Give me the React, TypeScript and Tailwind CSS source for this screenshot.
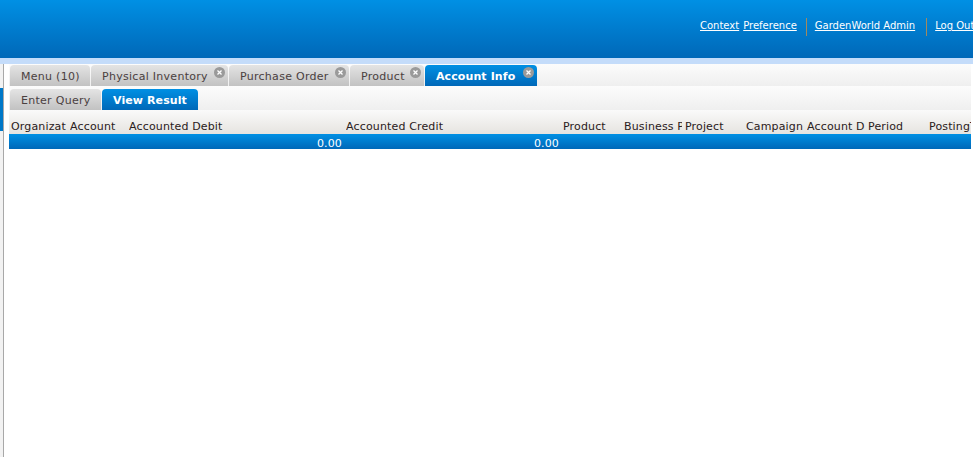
const font = "font-['DejaVu_Sans','Verdana',sans-serif]";

function CloseDot() {
  return (
    <span className="absolute right-[3px] top-[2px] flex h-[11px] w-[11px] items-center justify-center rounded-full bg-[#9a9a9a]">
      <svg width="7" height="7" viewBox="0 0 7 7">
        <path d="M1.5 1.5l4 4M5.5 1.5l-4 4" stroke="#fff" strokeWidth="1.3" />
      </svg>
    </span>
  );
}

function Tab({ label, width, active, closable }: { label: string; width: number; active?: boolean; closable?: boolean }) {
  return (
    <div
      className={`relative mr-px flex h-[21px] shrink-0 items-center rounded-t-[4px] pl-[11px] pt-[3px] text-[11px] ${
        active
          ? "bg-gradient-to-b from-[#0090e4] to-[#0068b8] font-bold tracking-[0.1px] text-white"
          : "bg-gradient-to-b from-[#e4e4e4] to-[#c2c2c2] tracking-[0.28px] text-[#4a4040]"
      }`}
      style={{ width }}
    >
      {label}
      {closable && <CloseDot />}
    </div>
  );
}

const columns: { label: string; width: number }[] = [
  { label: "Organizat", width: 59 },
  { label: "Account", width: 59 },
  { label: "Accounted Debit", width: 217 },
  { label: "Accounted Credit", width: 217 },
  { label: "Product", width: 61 },
  { label: "Business P", width: 61 },
  { label: "Project", width: 61 },
  { label: "Campaign", width: 61 },
  { label: "Account D", width: 61 },
  { label: "Period", width: 61 },
  { label: "PostingType", width: 45 },
];

export default function App() {
  return (
    <div className={`flex h-[457px] w-[973px] flex-col overflow-hidden bg-white ${font}`}>
      {/* Header */}
      <div className="flex h-[58px] shrink-0 justify-end overflow-hidden bg-gradient-to-b from-[#0090e4] to-[#0068b8]">
        <div className="mt-[18px] flex h-[18px] w-[273px] shrink-0 items-start whitespace-nowrap text-[10px] leading-[16px] text-white">
          <span className="shrink-0 underline">Context</span>
          <span className="ml-[4px] shrink-0 underline">Preference</span>
          <span className="ml-[9px] h-[18px] w-px shrink-0 bg-[#a08a60]" />
          <span className="ml-[8px] shrink-0 underline">GardenWorld Admin</span>
          <span className="ml-[11px] h-[18px] w-px shrink-0 bg-[#a08a60]" />
          <span className="ml-[8px] shrink-0 underline">Log Out</span>
        </div>
      </div>
      <div className="h-[6px] shrink-0 bg-[#c4dcfa]" />

      {/* Body */}
      <div className="flex min-h-0 flex-1">
        <div className="flex w-[3px] shrink-0 flex-col">
          <div className="h-[24px] bg-[#f2f2f2]" />
          <div className="h-[43px] bg-[#0078c8]" />
          <div className="flex-1 bg-[#f2f2f2]" />
        </div>
        <div className="w-px shrink-0 bg-[#a8a8a8]" />
        <div className="w-[5px] shrink-0 bg-white" />
        <div className="min-w-0 flex-1 pr-[2px]">
          <div className="flex h-[22px] items-end bg-gradient-to-b from-[#fcfcfc] to-[#efefef] pl-px">
            <Tab label="Menu (10)" width={80} />
            <Tab label="Physical Inventory" width={137} closable />
            <Tab label="Purchase Order" width={120} closable />
            <Tab label="Product" width={74} closable />
            <Tab label="Account Info" width={112} active closable />
          </div>
          <div className="flex h-[24px] items-end bg-gradient-to-b from-[#fcfcfc] to-[#efefef] pl-px">
            <Tab label="Enter Query" width={91} />
            <Tab label="View Result" width={96} active />
          </div>
          <div className="flex h-[24px] items-end overflow-hidden whitespace-nowrap bg-gradient-to-b from-[#fafafa] to-[#e6e4e0] pl-[2px] text-[11px] leading-[14px] tracking-[0.15px] text-[#2a2020]">
            {columns.map((c) => (
              <div key={c.label} className="shrink-0" style={{ width: c.width }}>
                <div className="overflow-hidden" style={{ width: c.width - 3 }}>
                  {c.label}
                </div>
              </div>
            ))}
          </div>
          <div className="flex h-[15px] items-center bg-gradient-to-b from-[#0090e4] to-[#0068b8] pt-[4px] text-[11px] leading-[11px] tracking-[0.15px] text-white">
            <div className="w-[333px] shrink-0 text-right">0.00</div>
            <div className="w-[217px] shrink-0 text-right">0.00</div>
          </div>
        </div>
      </div>
    </div>
  );
}
